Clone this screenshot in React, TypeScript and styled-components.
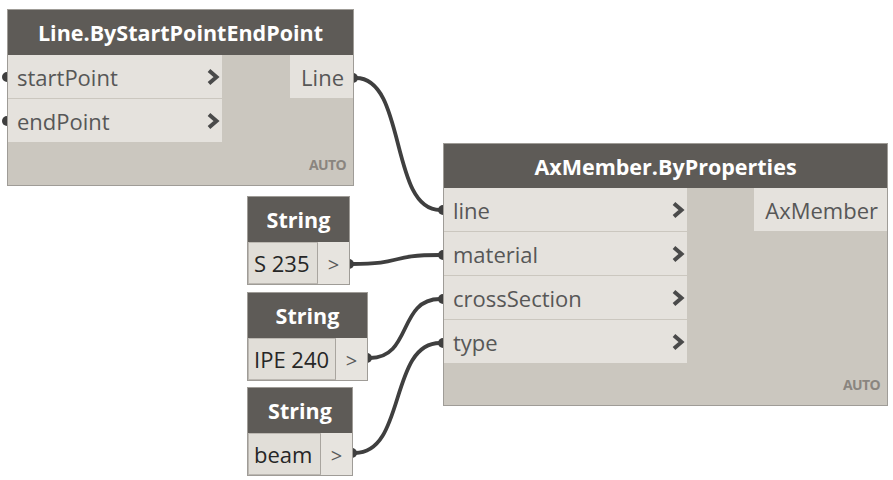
import React from "react";
import styled, { createGlobalStyle } from "styled-components";

const GlobalStyle = createGlobalStyle`
  html, body {
    margin: 0;
    padding: 0;
    background: #ffffff;
  }
  body {
    font-family: "Open Sans", "Liberation Sans", sans-serif;
  }
`;

const Canvas = styled.div`
  position: relative;
  width: 893px;
  height: 480px;
  overflow: hidden;
  background: #ffffff;
`;

const Wires = styled.svg`
  position: absolute;
  left: 0;
  top: 0;
`;

const Node = styled.div<{ $x: number; $y: number; $w: number; $h: number }>`
  position: absolute;
  left: ${(p) => p.$x}px;
  top: ${(p) => p.$y}px;
  width: ${(p) => p.$w}px;
  height: ${(p) => p.$h}px;
  box-sizing: border-box;
  border: 1px solid #9f9c97;
  background: #cbc7bf;
  display: flex;
  flex-direction: column;
`;

const Header = styled.div<{ $h?: number }>`
  height: ${(p) => p.$h ?? 44}px;
  flex: none;
  background: #5e5b57;
  color: #ffffff;
  font-weight: 700;
  font-size: 21.5px;
  display: flex;
  align-items: center;
  justify-content: center;
`;

const Body = styled.div<{ $cols: number }>`
  flex: 1;
  display: grid;
  grid-template-columns: ${(p) => p.$cols}px 1fr;
`;

const Inputs = styled.div`
  display: flex;
  flex-direction: column;
`;

const InRow = styled.div`
  height: 43px;
  box-sizing: border-box;
  background: #e5e2dd;
  color: #575757;
  font-size: 22px;
  display: flex;
  align-items: center;
  justify-content: space-between;
  padding: 0 1px 0 9px;
  & + & {
    margin-top: 1px;
  }
`;

const Outputs = styled.div`
  display: flex;
  flex-direction: column;
  align-items: flex-end;
  justify-content: space-between;
`;

const OutRow = styled.div`
  height: 43px;
  background: #e5e2dd;
  color: #575757;
  font-size: 22px;
  display: flex;
  align-items: center;
  padding: 0 9px 0 11px;
`;

const Auto = styled.div`
  font-size: 14px;
  font-weight: 700;
  color: #8a857f;
  letter-spacing: -0.6px;
  padding: 0 7px 11px 0;
`;

const FieldRow = styled.div`
  flex: 1;
  display: flex;
`;

const Field = styled.div`
  flex: 1;
  box-sizing: border-box;
  background: #e1ded8;
  border: 1px solid #bcb8b2;
  border-right-color: #a9a59f;
  color: #262626;
  font-size: 22px;
  display: flex;
  align-items: center;
  padding-left: 5px;
`;

const FieldButton = styled.div`
  width: 31px;
  flex: none;
  background: #e7e4df;
  color: #5a5a5a;
  font-size: 20px;
  display: flex;
  align-items: center;
  justify-content: center;
  padding-top: 3px;
  box-sizing: border-box;
`;

const Chevron = () => (
  <svg width="16" height="18" viewBox="0 0 16 18">
    <polyline
      points="4,2.5 11.5,9 4,15.5"
      fill="none"
      stroke="#4a4a4a"
      strokeWidth="4"
      strokeLinejoin="miter"
    />
  </svg>
);

type CodeNodeProps = {
  x: number;
  y: number;
  w: number;
  h: number;
  title: string;
  inputs: string[];
  inputWidth: number;
  output: string;
  headerH?: number;
};

const CodeNode: React.FC<CodeNodeProps> = ({ x, y, w, h, title, inputs, inputWidth, output, headerH }) => (
  <Node $x={x} $y={y} $w={w} $h={h}>
    <Header $h={headerH}>{title}</Header>
    <Body $cols={inputWidth}>
      <Inputs>
        {inputs.map((name) => (
          <InRow key={name}>
            {name}
            <Chevron />
          </InRow>
        ))}
      </Inputs>
      <Outputs>
        <OutRow>{output}</OutRow>
        <Auto>AUTO</Auto>
      </Outputs>
    </Body>
  </Node>
);

const StringNode: React.FC<{ x: number; y: number; w: number; value: string }> = ({ x, y, w, value }) => (
  <Node $x={x} $y={y} $w={w} $h={89}>
    <Header $h={45}>String</Header>
    <FieldRow>
      <Field>{value}</Field>
      <FieldButton>&gt;</FieldButton>
    </FieldRow>
  </Node>
);

// half-disc pins at the node edges
const pinOut = (x: number, y: number) => `M${x},${y - 5} A5,5 0 0 1 ${x},${y + 5} Z`;
const pinIn = (x: number, y: number) => `M${x},${y - 5} A5,5 0 0 0 ${x},${y + 5} Z`;

const wire = (x1: number, y1: number, x2: number, y2: number) => {
  const d = Math.max(40, (x2 - x1) * 0.6);
  return `M${x1},${y1} C${x1 + d},${y1} ${x2 - d},${y2} ${x2},${y2}`;
};

const links = [
  { from: [353, 78], to: [443, 210] },
  { from: [349, 264], to: [443, 255] },
  { from: [367, 358], to: [443, 299] },
  { from: [352, 453], to: [443, 343] },
];

export default function App() {
  return (
    <>
      <GlobalStyle />
      <Canvas>
        <Wires width="893" height="480">
          {links.map((l, i) => (
            <path
              key={i}
              d={wire(l.from[0] + 3, l.from[1], l.to[0] - 3, l.to[1])}
              fill="none"
              stroke="#3f3f3f"
              strokeWidth="3.8"
            />
          ))}
          {links.map((l, i) => (
            <g key={"p" + i} fill="#3f3f3f">
              <path d={pinOut(l.from[0], l.from[1])} />
              <path d={pinIn(l.to[0], l.to[1])} />
            </g>
          ))}
          <path d={pinIn(7, 77)} fill="#3f3f3f" />
          <path d={pinIn(7, 121)} fill="#3f3f3f" />
        </Wires>
        <CodeNode
          x={7}
          y={9}
          w={347}
          h={177}
          title="Line.ByStartPointEndPoint"
          inputs={["startPoint", "endPoint"]}
          inputWidth={214}
          output="Line"
          headerH={45}
        />
        <CodeNode
          x={443}
          y={143}
          w={445}
          h={263}
          title="AxMember.ByProperties"
          inputs={["line", "material", "crossSection", "type"]}
          inputWidth={243}
          output="AxMember"
        />
        <StringNode x={247} y={196} w={103} value="S 235" />
        <StringNode x={247} y={292} w={121} value="IPE 240" />
        <StringNode x={247} y={387} w={106} value="beam" />
      </Canvas>
    </>
  );
}
